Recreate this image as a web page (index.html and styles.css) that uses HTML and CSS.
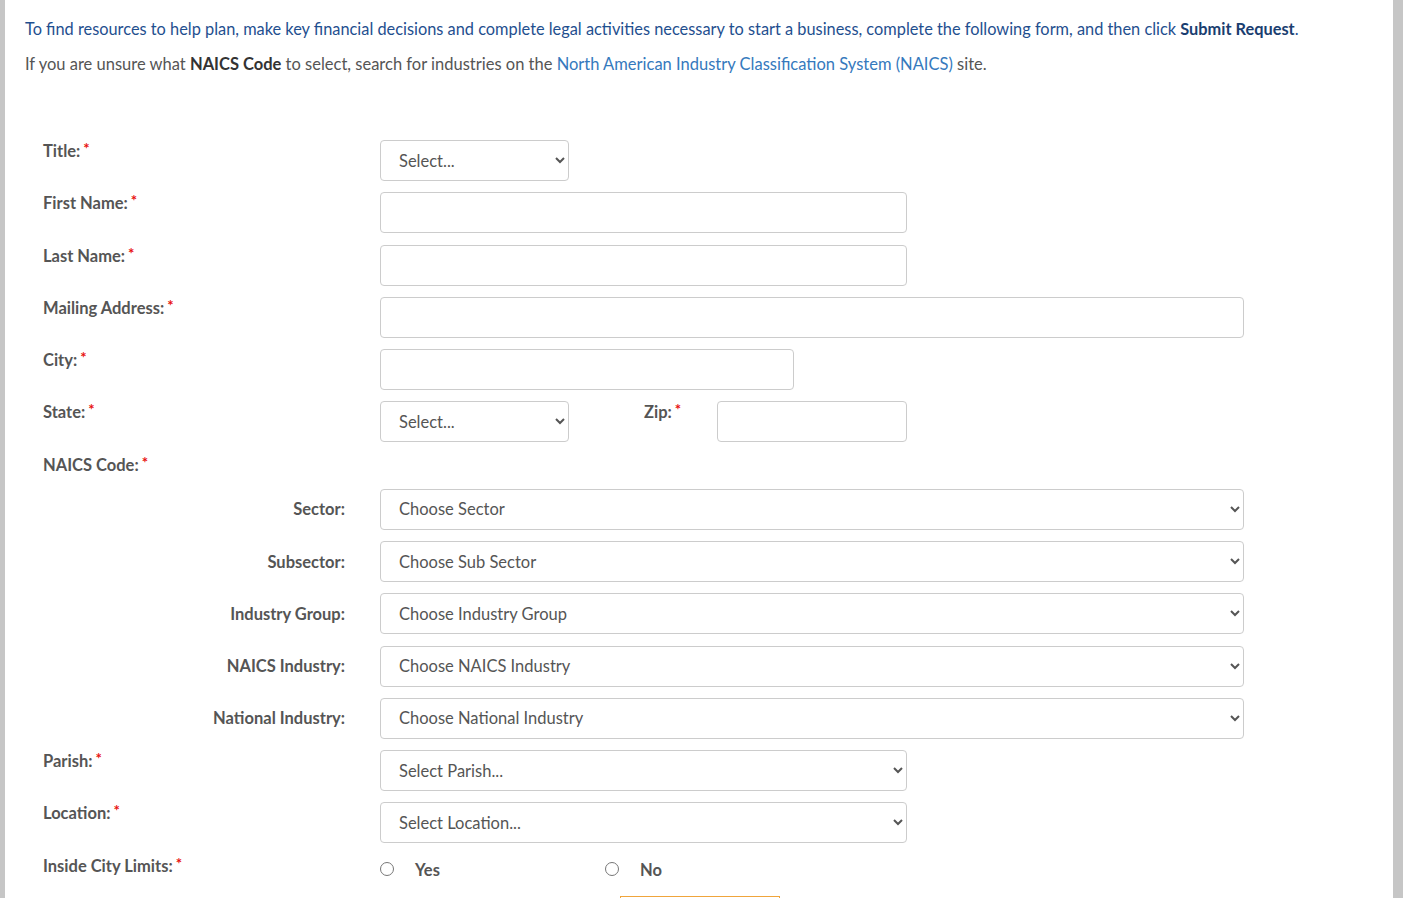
FILE: index.html
```html
<!DOCTYPE html>
<html lang="en">
<head>
    <meta charset="UTF-8">
    <meta name="viewport" content="width=device-width, initial-scale=1.0">
    <title>Business Resource Request</title>
    <link rel="stylesheet" href="styles.css">
</head>
<body>
    <div class="page">
        <p class="intro">To find resources to help plan, make key financial decisions and complete legal activities necessary to start a business, complete the following form, and then click <strong>Submit Request</strong>.</p>
        <p class="hint">If you are unsure what <strong>NAICS Code</strong> to select, search for industries on the <a href="#">North American Industry Classification System (NAICS)</a> site.</p>

        <form class="request-form">
            <label class="field-label" for="title">Title: <span class="req">*</span></label>
            <div class="field">
                <select id="title" class="control control-sm">
                    <option>Select...</option>
                </select>
            </div>

            <label class="field-label" for="firstName">First Name: <span class="req">*</span></label>
            <div class="field"><input id="firstName" type="text" class="control control-md"></div>

            <label class="field-label" for="lastName">Last Name: <span class="req">*</span></label>
            <div class="field"><input id="lastName" type="text" class="control control-md"></div>

            <label class="field-label" for="address">Mailing Address: <span class="req">*</span></label>
            <div class="field"><input id="address" type="text" class="control control-lg"></div>

            <label class="field-label" for="city">City: <span class="req">*</span></label>
            <div class="field"><input id="city" type="text" class="control control-city"></div>

            <label class="field-label" for="state">State: <span class="req">*</span></label>
            <div class="field field-inline">
                <select id="state" class="control control-sm">
                    <option>Select...</option>
                </select>
                <label class="field-label zip-label" for="zip">Zip: <span class="req">*</span></label>
                <input id="zip" type="text" class="control control-zip">
            </div>

            <div class="field-label naics-label">NAICS Code: <span class="req">*</span></div>
            <div class="field"></div>

            <label class="sub-label" for="sector">Sector:</label>
            <div class="field">
                <select id="sector" class="control control-lg"><option>Choose Sector</option></select>
            </div>

            <label class="sub-label" for="subsector">Subsector:</label>
            <div class="field">
                <select id="subsector" class="control control-lg"><option>Choose Sub Sector</option></select>
            </div>

            <label class="sub-label" for="group">Industry Group:</label>
            <div class="field">
                <select id="group" class="control control-lg"><option>Choose Industry Group</option></select>
            </div>

            <label class="sub-label" for="naicsIndustry">NAICS Industry:</label>
            <div class="field">
                <select id="naicsIndustry" class="control control-lg"><option>Choose NAICS Industry</option></select>
            </div>

            <label class="sub-label" for="nationalIndustry">National Industry:</label>
            <div class="field">
                <select id="nationalIndustry" class="control control-lg"><option>Choose National Industry</option></select>
            </div>

            <label class="field-label" for="parish">Parish: <span class="req">*</span></label>
            <div class="field">
                <select id="parish" class="control control-md"><option>Select Parish...</option></select>
            </div>

            <label class="field-label" for="location">Location: <span class="req">*</span></label>
            <div class="field">
                <select id="location" class="control control-md"><option>Select Location...</option></select>
            </div>

            <div class="field-label">Inside City Limits: <span class="req">*</span></div>
            <div class="field radio-row">
                <label class="radio-opt"><input type="radio" name="cityLimits"> <span>Yes</span></label>
                <label class="radio-opt"><input type="radio" name="cityLimits"> <span>No</span></label>
            </div>

            <div></div>
            <div class="field actions">
                <button type="submit" class="submit-btn">Submit Request</button>
            </div>
        </form>
    </div>
</body>
</html>
```

FILE: styles.css
```css
html, body {
    margin: 0;
    height: 100%;
}
body {
    font-family: 'Lato', 'Liberation Sans', sans-serif;
    background-color: #c6c6c6;
    overflow: hidden;
}
.page {
    background-color: #fff;
    margin: 0 10px 0 5px;
    min-height: 100%;
    padding: 17px 20px 0 20px;
    box-sizing: border-box;
}
.intro, .hint {
    margin: 0 0 11px 0;
    line-height: 24px;
}
.intro {
    font-size: 16.35px;
    color: #1f4f8f;
}
.intro strong {
    color: #1a3e70;
}
.hint {
    font-size: 16.5px;
    color: #555;
}
.hint strong {
    color: #333;
}
.hint a {
    color: #3579bd;
    text-decoration: none;
}

.request-form {
    display: grid;
    grid-template-columns: 302px 1fr;
    column-gap: 35px;
    row-gap: 11.25px;
    margin-top: 64px;
    padding-left: 18px;
}
.field-label {
    font-weight: bold;
    font-size: 16.5px;
    line-height: 22px;
    color: #555;
}
.naics-label {
    min-height: 24px;
}
.req {
    color: #e8100f;
    font-size: 15px;
    font-weight: bold;
    position: relative;
    top: -3px;
    margin-left: -1px;
}
.sub-label {
    font-weight: bold;
    font-size: 16.5px;
    color: #555;
    text-align: right;
    align-self: center;
}
.field {
    display: flex;
    align-items: center;
}

.control {
    height: 41px;
    box-sizing: border-box;
    border: 1px solid #ccc;
    border-radius: 4px;
    background-color: #fff;
    font-family: 'Lato', 'Liberation Sans', sans-serif;
    font-size: 16.5px;
    color: #555;
    padding: 0 10px 0 18px;
    margin: 0;
}
select.control {
    padding-left: 14px;
}
.control-sm { width: 189px; }
.control-md { width: 527px; }
.control-city { width: 414px; }
.control-lg { width: 864px; }
.control-zip { width: 190px; }

.field-inline {
    align-items: flex-start;
}
.zip-label {
    width: 73px;
    margin-left: 75px;
}

.radio-row {
    height: 30px;
}
.radio-opt {
    display: flex;
    align-items: center;
    width: 225px;
    font-weight: bold;
    font-size: 16.5px;
    color: #555;
}
.radio-opt input {
    appearance: none;
    width: 14px;
    height: 14px;
    border: 1px solid #777;
    border-radius: 50%;
    margin: 0 21px 0 0;
    position: relative;
    top: -1px;
}

.actions {
    padding-left: 240px;
}
.submit-btn {
    width: 160px;
    height: 40px;
    border: 1px solid #f0a53c;
    border-radius: 0;
    background-color: #fff;
    color: #f0a53c;
    font-family: 'Lato', 'Liberation Sans', sans-serif;
    font-size: 16px;
    font-weight: bold;
}
```
